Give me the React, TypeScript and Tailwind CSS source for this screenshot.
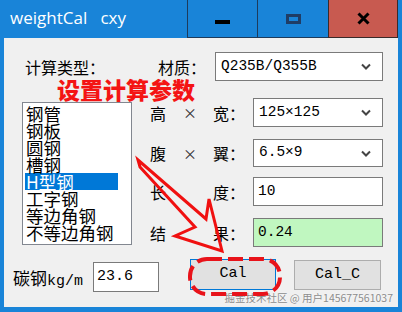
import React from "react";

const cjk = "font-['Noto_Sans_CJK_SC','Noto_Sans',sans-serif]";
const mono = "font-['Liberation_Mono','Noto_Sans_CJK_SC',monospace]";

const steelTypes = ["钢管", "钢板", "圆钢", "槽钢", "H型钢", "工字钢", "等边角钢", "不等边角钢"];

const Chevron = () => (
    <svg width="10" height="7" viewBox="0 0 10 7" className="shrink-0">
        <path d="M1 1.5 L5 5.5 L9 1.5" fill="none" stroke="#444" strokeWidth="2"/>
    </svg>
);

const Select = ({value, width}: { value: string; width: string }) => (
    <div className={`${width} h-full flex items-center justify-between bg-white border border-[#7a7a7a] pl-[5px] pr-[11px]`}>
        <span className={`${mono} text-[14.5px] text-black`}>{value}</span>
        <Chevron/>
    </div>
);

const Label3 = ({a, b}: { a: string; b: string }) => (
    <div className={`${cjk} w-[103px] flex items-center text-[16px] text-black`}>
        <span className="w-[33px]">{a}</span>
        <span className="w-[30px] text-[14px] text-[#333]">×</span>
        <span>{b}：</span>
    </div>
);

const LabelGap = ({a, b}: { a: string; b: string }) => (
    <div className={`${cjk} w-[103px] flex items-center text-[16px] text-black`}>
        <span className="w-[63px]">{a}</span>
        <span>{b}：</span>
    </div>
);

export default function App() {
    return (
        <div className="relative w-[402px] h-[312px] bg-[#1984d8] flex flex-col overflow-hidden">
            {/* title bar */}
            <div className="h-[38px] flex shrink-0">
                <div className="flex-1 flex items-center pl-[10px] pb-[2px] text-white text-[17px] font-['Open_Sans',sans-serif] whitespace-pre">
                    weightCal   cxy
                </div>
                <div className="w-[70px] h-full border-l border-b border-[#1d3b5c] flex items-center justify-center">
                    <div className="w-[15px] h-[4px] bg-black mt-[6px]"/>
                </div>
                <div className="w-[71px] h-full border-l border-b border-[#1d3b5c] flex items-center justify-center">
                    <div className="w-[15px] h-[10px] border-[3px] border-[#1f3d66]"/>
                </div>
                <div className="w-[70px] h-full bg-[#c85a50] border-l border-r border-b border-[#3a2a2a] flex items-center justify-center">
                    <svg width="13" height="13" viewBox="0 0 13 13">
                        <path d="M1.5 1.5 L11.5 11.5 M11.5 1.5 L1.5 11.5" stroke="#000" strokeWidth="3"/>
                    </svg>
                </div>
                <div className="w-[4px]"/>
            </div>

            {/* client area */}
            <div className="relative h-[269px] mx-[4px] bg-[#f0f0f0]">
                <div className="flex pt-[14px]">
                    <div className="w-[146px] pl-[18px]">
                        <div className={`${cjk} h-[29px] flex items-center pl-[3px] text-[16px] text-black`}>
                            计算类型：
                        </div>
                        <div className="mt-[21px] w-[110px] h-[143px] bg-white border border-[#828790] pt-[2px] overflow-hidden">
                            {steelTypes.map((t, i) => (
                                <div
                                    key={t}
                                    className={`${cjk} ml-[2px] w-[93px] h-[17px] leading-[17px] text-[17.5px] pl-[1px] whitespace-nowrap ${i === 4 ? "bg-[#0078d7] text-white" : "text-black"}`}
                                >
                                    {t}
                                </div>
                            ))}
                        </div>
                    </div>

                    <div className="flex flex-col">
                        <div className="h-[29px] flex">
                            <div className={`${cjk} w-[65px] pl-[8px] flex items-center text-[16px] text-black`}>材质：</div>
                            <Select value="Q235B/Q355B" width="w-[168px]"/>
                        </div>
                        <div className="h-[29px] flex mt-[17px]">
                            <Label3 a="高" b="宽"/>
                            <Select value="125×125" width="w-[130px]"/>
                        </div>
                        <div className="h-[28px] flex mt-[12px]">
                            <Label3 a="腹" b="翼"/>
                            <Select value="6.5×9" width="w-[130px]"/>
                        </div>
                        <div className="h-[29px] flex mt-[10px]">
                            <LabelGap a="长" b="度"/>
                            <div className={`${mono} w-[130px] h-full flex items-center pl-[4px] bg-white border border-[#7a7a7a] text-[14.5px] text-black`}>10</div>
                        </div>
                        <div className="h-[29px] flex mt-[12px]">
                            <LabelGap a="结" b="果"/>
                            <div className={`${mono} w-[130px] h-full flex items-center pl-[4px] bg-[#c0f7c0] border border-[#7a7a7a] text-[14.5px] text-black`}>0.24</div>
                        </div>
                    </div>
                </div>

                {/* bottom row */}
                <div className="flex items-start mt-[12px] pl-[9px]">
                    <div className="h-[33px] w-[80px] flex items-baseline pt-[6px] text-[17px] text-black">
                        <span className={cjk}>碳钢</span>
                        <span className={`${mono} text-[15px]`}>kg/m</span>
                    </div>
                    <div className={`${mono} mt-[3px] w-[66px] h-[30px] flex items-center pl-[3px] bg-white border border-[#7a7a7a] text-[15px] text-black`}>
                        23.6
                    </div>
                    <button className={`${mono} ml-[31px] w-[86px] h-[31px] bg-[#e1e1e1] border border-[#0078d7] text-[15px] text-black`}>
                        Cal
                    </button>
                    <button className={`${mono} ml-[18px] mt-[1px] w-[87px] h-[30px] bg-[#e1e1e1] border border-[#adadad] text-[15px] text-black`}>
                        Cal_C
                    </button>
                </div>

                <div className={`${cjk} absolute right-[5px] bottom-[4px] text-[10.5px] leading-none text-[#8c8c8c] [text-shadow:0_0_2px_#fff]`}>
                    掘金技术社区 @ 用户145677561037
                </div>
            </div>

            {/* annotations drawn over the window */}
            <span className={`${cjk} absolute left-[57px] top-[78px] text-[23px] leading-none font-black text-[#f41414]`}>
                设置计算参数
            </span>
            <svg className="absolute inset-0 pointer-events-none" width="402" height="312" viewBox="0 0 402 312">
                <path
                    d="M138 160 L206 219 L209 199 L222 251 L175 236 L195 227 L140 167 Z"
                    fill="none"
                    stroke="#f01010"
                    strokeWidth="3"
                    strokeLinejoin="miter"
                />
                <rect x="190" y="259" width="90" height="35" rx="17" fill="none" stroke="#e8131a" strokeWidth="4" strokeDasharray="15 6"/>
            </svg>
        </div>
    );
}
